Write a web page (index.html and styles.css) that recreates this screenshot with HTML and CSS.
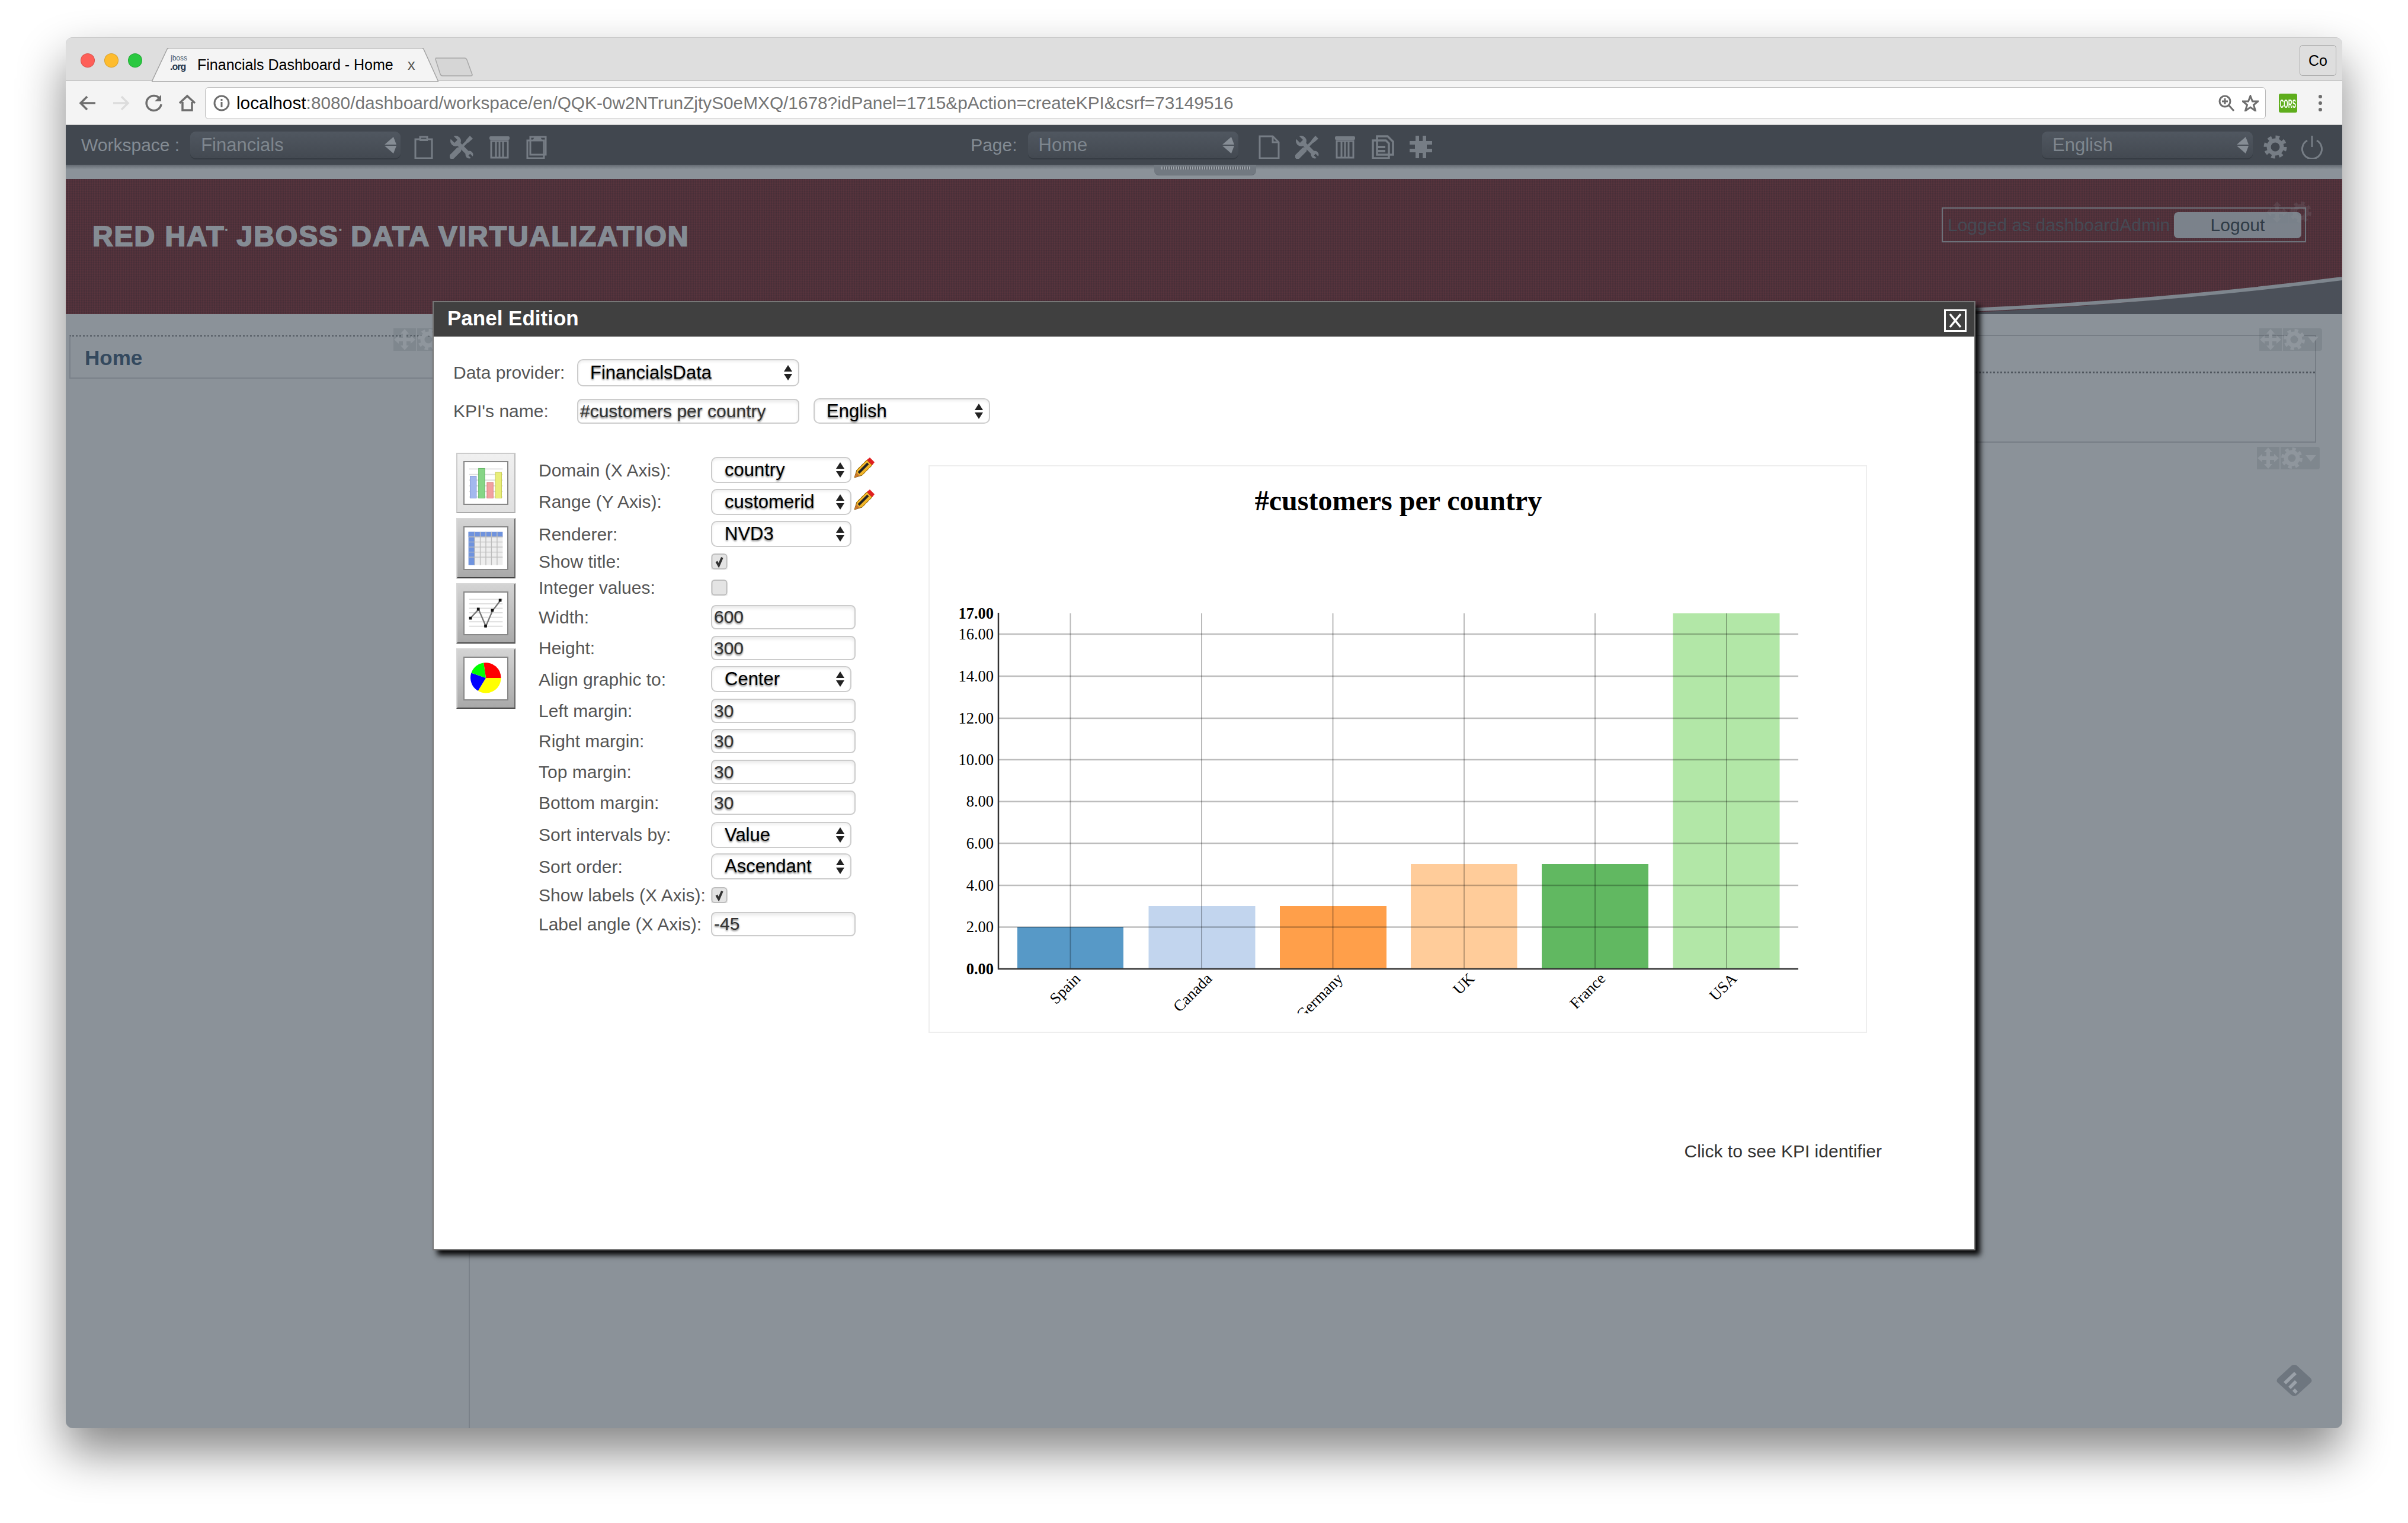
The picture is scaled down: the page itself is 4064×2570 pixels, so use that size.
FILE: index.html
```html
<!DOCTYPE html>
<html lang="en">
<head>
<meta charset="utf-8">
<title>Financials Dashboard - Home</title>
<link rel="stylesheet" href="styles.css">
</head>
<body>
<svg class="defs" width="0" height="0" aria-hidden="true">
  <symbol id="i-clip" viewBox="0 0 40 40"><path d="M6 7h8V3h12v4h8v32H6z" fill="none" stroke-width="3" class="st"/><path d="M13 8h14" stroke-width="4" class="st"/></symbol>
  <symbol id="i-tools" viewBox="0 0 40 40"><circle cx="10" cy="10" r="9" class="fl"/><path d="M0 5L5 0 13 8 8 13Z" class="bgf"/><path d="M11 11L33 33" stroke-width="7" class="st"/><circle cx="33" cy="33" r="6.500" class="fl"/><path d="M33 33L39 39" stroke-width="4" class="bgs"/><path d="M4 36L15 25" stroke-width="9" stroke-linecap="round" class="st"/><path d="M15 25L32 8" stroke-width="4.500" class="st"/><path d="M27 9L34 1l5 5-8 7z" class="fl"/></symbol>
  <symbol id="i-trash" viewBox="0 0 40 40"><rect x="3" y="2" width="34" height="6" rx="2" class="fl"/><path d="M6 10h28v28H6z" fill="none" stroke-width="3" class="st"/><path d="M14 11v26M20 11v26M26 11v26" stroke-width="3" class="st"/></symbol>
  <symbol id="i-paste" viewBox="0 0 40 40"><path d="M8 3h26v30H8z" fill="none" stroke-width="3" class="st"/><path d="M3 9h28v30H3z" fill="#424950" stroke-width="3" class="st"/><path d="M12 9l3-6h10l3 6z" class="fl"/></symbol>
  <symbol id="i-page" viewBox="0 0 40 40"><path d="M4 2h22l10 10v27H4z" fill="none" stroke-width="3" class="st"/><path d="M26 2v10h10" fill="none" stroke-width="3" class="st"/></symbol>
  <symbol id="i-copy" viewBox="0 0 40 40"><path d="M10 2h18l9 9v22H10z" fill="none" stroke-width="3.500" class="st"/><path d="M3 9h22l5 5v25H3z" fill="#424950" stroke-width="3.500" class="st"/><path d="M9 20h15M9 27h15" stroke-width="4" class="st"/></symbol>
  <symbol id="i-puzzle" viewBox="0 0 40 40"><path d="M11 1h6v9h6V1h6v9h10v6h-9v7h9v6H29v10h-6v-9h-6v9h-6V29H1v-6h9v-7H1v-6h10z" class="fl"/></symbol>
  <symbol id="i-gear" viewBox="0 0 40 40"><circle cx="20" cy="20" r="16" fill="none" stroke-width="7" stroke-dasharray="6.28 6.28" class="st"/><circle cx="20" cy="20" r="11" fill="none" stroke-width="7" class="st"/></symbol>
  <symbol id="i-power" viewBox="0 0 40 40"><path d="M12 9a16.500 16.500 0 1 0 16 0" fill="none" stroke-width="3" class="st"/><path d="M20 1v19" stroke-width="3" class="st"/></symbol>
  <symbol id="i-updown" viewBox="0 0 24 28"><path d="M17 0l5 13H10L2 13z" class="ar"/><path d="M2 15h20l-5 13z" class="ar"/></symbol>
  <symbol id="i-pencil" viewBox="0 0 36 36"><path d="M2 34l4-13L23 4l9 9-17 17z" fill="#f0b429" stroke="#7a5a10" stroke-width="1"/><path d="M9 26L25 10" stroke="#222" stroke-width="4"/><path d="M23 4l5-4 8 8-4 5z" fill="#e02020"/><path d="M2 34l3-9 6 6z" fill="#c9762c"/></symbol>
  <symbol id="i-move" viewBox="0 0 38 38"><path d="M19 1l7 8h-4v7h7v-4l8 7-8 7v-4h-7v7h4l-7 8-7-8h4v-7H9v4l-8-7 8-7v4h7V9h-4z"/></symbol>
  <symbol id="i-cog" viewBox="0 0 38 38"><circle cx="19" cy="19" r="15" fill="none" stroke="currentColor" stroke-width="6" stroke-dasharray="5.9 5.9"/><circle cx="19" cy="19" r="10" fill="none" stroke="currentColor" stroke-width="7"/></symbol>
</svg>

<main class="window">
  <header class="tabstrip">
    <div class="lights">
      <span class="light red"></span><span class="light yellow"></span><span class="light green"></span>
    </div>
    <div class="tab">
      <svg class="tab-shape" viewBox="0 0 484 57"><path d="M0 57L26 2Q27 0 29 0H456Q458 0 459 2L484 57Z"/></svg>
      <div class="favicon"><span class="fav-a">jboss</span><span class="fav-b">.org</span></div>
      <span class="tab-title">Financials Dashboard - Home</span>
      <span class="tab-close">x</span>
    </div>
    <svg class="newtab" viewBox="0 0 64 32"><path d="M1 1H50Q53 1 54 4L63 29Q63 31 61 31H13Q10 31 9 28L1 3Q1 1 3 1Z"/></svg>
    <div class="profile">Co</div>
  </header>

  <div class="toolbar">
    <svg class="nav" viewBox="0 0 32 32"><path d="M29 16H5M15 5L4 16l11 11" class="nav-line"/></svg>
    <svg class="nav off" viewBox="0 0 32 32"><path d="M3 16h24M17 5l11 11-11 11" class="nav-line"/></svg>
    <svg class="nav" viewBox="0 0 32 32"><path d="M26 9A12.500 12.500 0 1 0 28 18" class="nav-line"/><path d="M28 2v11H17z" class="nav-fill"/></svg>
    <svg class="nav" viewBox="0 0 32 32"><path d="M3 16L16 4l13 12M8 14v14h16V14" class="nav-line"/></svg>
    <div class="omnibox">
      <svg class="info" viewBox="0 0 28 28"><circle cx="14" cy="14" r="12" class="nav-line thin"/><path d="M12.500 12h3v9h-3zM12.500 7h3v3h-3z" class="nav-fill"/></svg>
      <span class="url"><span class="host">localhost</span>:8080/dashboard/workspace/en/QQK-0w2NTrunZjtyS0eMXQ/1678?idPanel=1715&amp;pAction=createKPI&amp;csrf=73149516</span>
      <svg class="omni-icon" viewBox="0 0 28 28"><circle cx="11" cy="11" r="9" class="nav-line thin"/><path d="M11 6v10M6 11h10M17 17l9 10" class="nav-line thin"/></svg>
      <svg class="omni-icon star" viewBox="0 0 28 28"><path d="M14 2l3.500 9H27l-7.500 6 3 10L14 21l-8.500 6 3-10L1 11h9.500z" class="nav-line thin"/></svg>
    </div>
    <div class="cors"><span class="cors-text">CORS</span></div>
    <div class="dots"><span class="dot"></span><span class="dot"></span><span class="dot"></span></div>
  </div>

  <nav class="adminbar">
    <div class="bar-group">
      <span class="bar-label">Workspace :</span>
      <div class="bar-select"><span>Financials</span><svg class="updown"><use href="#i-updown"/></svg></div>
      <div class="bar-icons">
        <svg class="bar-icon"><use href="#i-clip"/></svg>
        <svg class="bar-icon"><use href="#i-tools"/></svg>
        <svg class="bar-icon"><use href="#i-trash"/></svg>
        <svg class="bar-icon"><use href="#i-paste"/></svg>
      </div>
    </div>
    <div class="bar-group mid">
      <span class="bar-label">Page:</span>
      <div class="bar-select"><span>Home</span><svg class="updown"><use href="#i-updown"/></svg></div>
      <div class="bar-icons wide">
        <svg class="bar-icon"><use href="#i-page"/></svg>
        <svg class="bar-icon"><use href="#i-tools"/></svg>
        <svg class="bar-icon"><use href="#i-trash"/></svg>
        <svg class="bar-icon"><use href="#i-copy"/></svg>
        <svg class="bar-icon"><use href="#i-puzzle"/></svg>
      </div>
    </div>
    <div class="bar-group end">
      <div class="bar-select"><span>English</span><svg class="updown"><use href="#i-updown"/></svg></div>
      <div class="bar-icons tight">
        <svg class="bar-icon"><use href="#i-gear"/></svg>
        <svg class="bar-icon"><use href="#i-power"/></svg>
      </div>
    </div>
  </nav>
  <div class="strip"><div class="grip"></div></div>

  <section class="banner">
    <svg class="swoosh" viewBox="0 0 3842 228" preserveAspectRatio="none">
      <path d="M3150 228Q3500 215 3842 168V228Z" class="swoosh-fill"/>
      <path d="M3130 224Q3500 212 3842 168" class="swoosh-line"/>
    </svg>
    <div class="logo">RED HAT<span class="reg">•</span> JBOSS<span class="reg">•</span> DATA VIRTUALIZATION</div>
    <div class="login">
      <span class="login-text">Logged as dashboardAdmin</span>
      <span class="logout">Logout</span>
      <div class="handles over-login"><svg class="h-move"><use href="#i-move"/></svg><svg class="h-cog"><use href="#i-cog"/></svg></div>
    </div>
  </section>

  <section class="content">
    <div class="col-left">
      <div class="home-panel">Home</div>
      <div class="handles h-home"><svg class="h-move"><use href="#i-move"/></svg><svg class="h-cog"><use href="#i-cog"/></svg></div>
    </div>
    <div class="col-right">
      <div class="right-panel"><div class="right-title"></div></div>
      <div class="handles h-top"><svg class="h-move"><use href="#i-move"/></svg><svg class="h-cog"><use href="#i-cog"/></svg><span class="h-caret"></span></div>
      <div class="handles h-bottom"><svg class="h-move"><use href="#i-move"/></svg><svg class="h-cog"><use href="#i-cog"/></svg><span class="h-caret"></span></div>
    </div>
    <svg class="feed" viewBox="0 0 60 54"><path d="M26 1Q30-1 34 1L58 23Q61 27 58 30L36 50Q33 53 30 53H30Q27 53 24 50L2 30Q-1 27 2 23Z" class="feed-bg"/><path d="M12 29L30 12l4 4-18 17zM20 37l11-11 4 4-11 11zM27 44l4-4 5 5-4 4z" class="feed-fg"/></svg>

    <div class="modal">
      <div class="modal-title">
        <span>Panel Edition</span>
        <svg class="modal-close" viewBox="0 0 38 38"><rect x="1.500" y="1.500" width="35" height="35" class="close-box"/><path d="M10 8l18 22M28 8L10 30" class="close-x"/></svg>
      </div>
      <div class="modal-body">
        <div class="top-row">
          <span class="top-label">Data provider:</span>
          <div class="sel sel-wide"><span class="ctl-text">FinancialsData</span><span class="arrows"></span></div>
        </div>
        <div class="top-row second">
          <span class="top-label">KPI's name:</span>
          <div class="inp inp-wide"><span class="ctl-text">#customers per country</span></div>
          <div class="sel sel-lang"><span class="ctl-text">English</span><span class="arrows"></span></div>
        </div>
        <div class="editor">
          <div class="types">
            <div class="type-btn on"><svg class="type-art" viewBox="0 0 76 74"><rect width="76" height="74" class="art-bg"/><path d="M8 12H68M8 22H68M8 32H68M8 42H68M8 52H68M8 62H68" class="art-grid"/><rect x="10" y="25" width="11" height="39" fill="#a3b8ee" stroke="#7f96d8"/><rect x="25" y="11" width="11" height="53" fill="#86d586" stroke="#5fb35f"/><rect x="40" y="36" width="11" height="28" fill="#f2a0a0" stroke="#d97f7f"/><rect x="55" y="18" width="11" height="46" fill="#e9ee7a" stroke="#c9cc55"/></svg></div>
            <div class="type-btn"><svg class="type-art" viewBox="0 0 76 74"><rect width="76" height="74" class="art-bg"/><rect x="7" y="8" width="61" height="59" fill="#eee"/><rect x="7" y="8" width="61" height="9" fill="#6f93de"/><rect x="7" y="8" width="11" height="59" fill="#6f93de"/><path d="M7 17H68M7 26H68M7 35H68M7 44H68M7 53H68M18 8V67M28 8V67M38 8V67M48 8V67M58 8V67" class="art-cells"/></svg></div>
            <div class="type-btn"><svg class="type-art" viewBox="0 0 76 74"><rect width="76" height="74" class="art-bg"/><path d="M8 12H68M8 20H68M8 28H68M8 36H68M8 44H68M8 52H68M8 60H68" class="art-grid"/><path d="M11 45L25 30 38 60 50 32 64 14" class="art-line"/><path d="M8 43h5v5H8zM22 27h5v5h-5zM35 57h5v5h-5zM47 29h5v5h-5zM61 11h5v5h-5z" class="art-node"/></svg></div>
            <div class="type-btn"><svg class="type-art" viewBox="0 0 76 74"><rect width="76" height="74" class="art-bg"/><path d="M38 36L34 9A27 27 0 0 1 65 36Z" fill="#f00"/><path d="M38 36H65A27 27 0 0 1 24 59Z" fill="#ff0"/><path d="M38 36L24 59A27 27 0 0 1 12 27Z" fill="#00f"/><path d="M38 36L12 27A27 27 0 0 1 34 9Z" fill="#0f0"/></svg></div>
          </div>
          <div class="form">
            <div class="frow"><span class="flabel">Domain (X Axis):</span><div class="sel sel-form"><span class="ctl-text">country</span><span class="arrows"></span></div><svg class="pencil"><use href="#i-pencil"/></svg></div>
            <div class="frow"><span class="flabel">Range (Y Axis):</span><div class="sel sel-form"><span class="ctl-text">customerid</span><span class="arrows"></span></div><svg class="pencil"><use href="#i-pencil"/></svg></div>
            <div class="frow"><span class="flabel">Renderer:</span><div class="sel sel-form"><span class="ctl-text">NVD3</span><span class="arrows"></span></div></div>
            <div class="frow"><span class="flabel">Show title:</span><svg class="check" viewBox="0 0 28 28"><rect x="1" y="1" width="26" height="26" rx="5" class="check-box"/><path d="M9 14l4 7 6-14" class="check-mark"/></svg></div>
            <div class="frow"><span class="flabel">Integer values:</span><svg class="check" viewBox="0 0 28 28"><rect x="1" y="1" width="26" height="26" rx="5" class="check-box"/></svg></div>
            <div class="frow"><span class="flabel">Width:</span><div class="inp inp-form"><span class="ctl-text">600</span></div></div>
            <div class="frow"><span class="flabel">Height:</span><div class="inp inp-form"><span class="ctl-text">300</span></div></div>
            <div class="frow"><span class="flabel">Align graphic to:</span><div class="sel sel-form"><span class="ctl-text">Center</span><span class="arrows"></span></div></div>
            <div class="frow"><span class="flabel">Left margin:</span><div class="inp inp-form"><span class="ctl-text">30</span></div></div>
            <div class="frow"><span class="flabel">Right margin:</span><div class="inp inp-form"><span class="ctl-text">30</span></div></div>
            <div class="frow"><span class="flabel">Top margin:</span><div class="inp inp-form"><span class="ctl-text">30</span></div></div>
            <div class="frow"><span class="flabel">Bottom margin:</span><div class="inp inp-form"><span class="ctl-text">30</span></div></div>
            <div class="frow"><span class="flabel">Sort intervals by:</span><div class="sel sel-form"><span class="ctl-text">Value</span><span class="arrows"></span></div></div>
            <div class="frow"><span class="flabel">Sort order:</span><div class="sel sel-form"><span class="ctl-text">Ascendant</span><span class="arrows"></span></div></div>
            <div class="frow"><span class="flabel">Show labels (X Axis):</span><svg class="check" viewBox="0 0 28 28"><rect x="1" y="1" width="26" height="26" rx="5" class="check-box"/><path d="M9 14l4 7 6-14" class="check-mark"/></svg></div>
            <div class="frow"><span class="flabel">Label angle (X Axis):</span><div class="inp inp-form"><span class="ctl-text">-45</span></div></div>
          </div>
          <div class="chart-frame">
            <svg class="chart" viewBox="1569 787 1580 954" width="1580" height="954">
              <defs><clipPath id="labelclip"><rect x="1569" y="787" width="1580" height="923"/></clipPath></defs>
              <text x="2360" y="861" class="c-title">#customers per country</text>
              <g class="bars">
                <rect x="1717" y="1564" width="179" height="71" fill="#1f77b4"/>
                <rect x="1938.500" y="1529" width="180" height="106" fill="#aec7e8"/>
                <rect x="2160" y="1529" width="180" height="106" fill="#ff7f0e"/>
                <rect x="2381" y="1458" width="179.500" height="177" fill="#ffbb78"/>
                <rect x="2602" y="1458" width="180" height="177" fill="#2ca02c"/>
                <rect x="2823.500" y="1035" width="180" height="600" fill="#98df8a"/>
              </g>
              <g class="grid">
                <path d="M1685 1070H3035M1685 1141H3035M1685 1212H3035M1685 1282H3035M1685 1352.500H3035M1685 1423H3035M1685 1494H3035M1685 1564.500H3035" class="grid-h"/>
                <path d="M1806.500 1035V1635M2028 1035V1635M2249.500 1035V1635M2471 1035V1635M2692 1035V1635M2914 1035V1635" class="grid-v"/>
              </g>
              <path d="M1685 1034V1636M1684 1635H3035" class="axis"/>
              <g class="y-ticks">
                <text x="1677" y="1044" class="bold">17.00</text>
                <text x="1677" y="1079">16.00</text>
                <text x="1677" y="1150">14.00</text>
                <text x="1677" y="1221">12.00</text>
                <text x="1677" y="1291">10.00</text>
                <text x="1677" y="1361">8.00</text>
                <text x="1677" y="1432">6.00</text>
                <text x="1677" y="1503">4.00</text>
                <text x="1677" y="1573">2.00</text>
                <text x="1677" y="1644" class="bold">0.00</text>
              </g>
              <g class="x-ticks" clip-path="url(#labelclip)">
                <text transform="translate(1825 1653) rotate(-45)">Spain</text>
                <text transform="translate(2047 1653) rotate(-45)">Canada</text>
                <text transform="translate(2268 1653) rotate(-45)">Germany</text>
                <text transform="translate(2490 1653) rotate(-45)">UK</text>
                <text transform="translate(2711 1653) rotate(-45)">France</text>
                <text transform="translate(2933 1653) rotate(-45)">USA</text>
              </g>
            </svg>
          </div>
        </div>
        <div class="kpi-id">Click to see KPI identifier</div>
      </div>
    </div>
  </section>
</main>
</body>
</html>
```
FILE: styles.css
```css
* { box-sizing: border-box; }
html, body { margin: 0; padding: 0; background: #fff; }
body { height: 2570px; padding: 63px 111px 0; overflow: hidden; font-family: "Liberation Sans", Arial, sans-serif; }
.defs { position: absolute; }

.window { display: flex; flex-direction: column; height: 2347px; border-radius: 12px; background: #8b9299; overflow: hidden; box-shadow: 0 40px 80px rgba(0,0,0,.48); }

/* tab strip */
.tabstrip { position: relative; display: flex; align-items: flex-start; height: 74px; flex: none; background: #dedede; border-top: 1px solid #c2c2c2; border-bottom: 1px solid #a3a3a3; }
.lights { display: flex; gap: 16px; margin: 26px 0 0 25px; }
.light { width: 24px; height: 24px; border-radius: 50%; border: 1px solid rgba(0,0,0,.14); }
.red { background: #fe5f58; }
.yellow { background: #febc2e; }
.green { background: #2ac840; }
.tab { position: relative; display: flex; align-items: center; width: 484px; height: 57px; margin: 17px 0 0 16px; padding-left: 32px; }
.tab-shape { position: absolute; inset: 0; width: 484px; height: 57px; }
.tab-shape path { fill: #f4f4f4; stroke: #a3a3a3; stroke-width: 1.500; }
.favicon { position: relative; display: flex; flex-direction: column; width: 32px; height: 34px; margin-top: -2px; color: #25364c; line-height: 1; }
.fav-a { font-size: 12px; line-height: 13px; color: #4a5a6c; }
.fav-b { font-size: 16px; line-height: 16px; font-weight: bold; letter-spacing: -1px; margin-left: -1px; }
.tab-title { position: relative; margin-left: 13px; font-size: 25px; color: #000; white-space: nowrap; }
.tab-close { position: relative; margin-left: 24px; font-size: 26px; color: #555; }
.newtab { width: 64px; height: 32px; margin: 33px 0 0 -6px; }
.newtab path { fill: #d6d6d6; stroke: #a8a8a8; stroke-width: 1.500; }
.profile { margin: 12px 10px 0 auto; width: 62px; height: 52px; display: flex; align-items: center; justify-content: center; border: 1.500px solid #ababab; border-radius: 5px; font-size: 25px; color: #000; }

/* toolbar */
.toolbar { display: flex; align-items: center; height: 74px; flex: none; padding-left: 21px; gap: 24px; background: #f4f4f4; border-bottom: 1.500px solid #c4c4c4; }
.nav { width: 32px; height: 32px; flex: none; }
.nav-line { fill: none; stroke: #6e6e6e; stroke-width: 3.500; }
.nav-line.thin { stroke-width: 3; }
.nav-fill { fill: #6e6e6e; }
.off .nav-line { stroke: #dcdcdc; }
.omnibox { display: flex; align-items: center; width: 3478px; height: 54px; margin-left: -10px; padding: 0 11px 0 13px; background: #fff; border: 1.500px solid #bababa; border-radius: 6px; }
.info { width: 28px; height: 28px; flex: none; }
.url { margin-left: 11px; font-size: 29.800px; color: #757575; white-space: nowrap; }
.host { color: #000; }
.omni-icon { width: 28px; height: 28px; flex: none; margin-left: auto; }
.omni-icon.star { margin-left: 12px; }
.cors { display: flex; align-items: center; justify-content: center; width: 31px; height: 32px; margin-left: -2px; background: #5ead1c; border-radius: 3px; overflow: hidden; }
.cors-text { font-size: 14px; color: #fff; font-weight: bold; transform: scale(.68, 1.500); }
.dots { display: flex; flex-direction: column; gap: 5px; margin-left: 12px; }
.dot { width: 6px; height: 6px; border-radius: 50%; background: #6e6e6e; }

/* admin bar */
.adminbar { display: flex; align-items: center; height: 67px; flex: none; padding: 0 31px 0 26px; background: #41474f; }
.bar-group { display: flex; align-items: center; }
.bar-group.mid { margin-left: 711px; }
.bar-group.end { margin-left: auto; }
.bar-label { font-size: 30px; color: #838b93; white-space: nowrap; }
.bar-select { position: relative; display: flex; align-items: center; width: 355px; height: 45px; margin-left: 18px; padding-left: 18px; border-radius: 9px; background: linear-gradient(#505760, #434951); box-shadow: 0 2px 0 #363c43; font-size: 31px; color: #7e868e; }
.bar-group.end .bar-select { width: 356px; margin-left: 0; }
.updown { position: absolute; right: 5px; top: 9px; width: 24px; height: 28px; }
.ar { fill: #868d95; }
.bar-icons { display: flex; gap: 24px; margin-left: 19px; padding-top: 6px; }
.bar-icons.wide { margin-left: 32px; }
.bar-icons.tight { gap: 22px; margin-left: 18px; }
.bar-icon { width: 40px; height: 40px; }
.st { stroke: #767d85; fill: none; }
.fl { fill: #767d85; }
.bgf { fill: #41474f; }
.bgs { stroke: #41474f; fill: none; }

.strip { position: relative; height: 24px; flex: none; background: linear-gradient(#646a72, #8b9299 8px); }
.grip { position: absolute; left: 1837px; top: 0; width: 172px; height: 18px; border-radius: 0 0 8px 8px; background: #727981; border-bottom: 1px solid #666d75; }
.grip::before { content: ""; position: absolute; left: 12px; right: 10px; top: 3px; height: 5px; background: repeating-linear-gradient(90deg, #9ea4ab 0 2px, #5c6269 2px 4px); }

/* banner */
.banner { position: relative; display: flex; justify-content: space-between; align-items: flex-start; height: 228px; flex: none; background-color: #51343d; background-image: repeating-linear-gradient(90deg, rgba(110,50,60,.14) 0 2px, rgba(40,30,40,.14) 2px 4px), repeating-linear-gradient(0deg, rgba(110,50,60,.1) 0 2px, rgba(40,30,40,.1) 2px 4px); }
.swoosh { position: absolute; inset: 0; width: 100%; height: 100%; }
.swoosh-fill { fill: #4b5059; }
.swoosh-line { fill: none; stroke: #7e868e; stroke-width: 6; }
.logo { position: relative; margin: 56px 0 0 45px; font-size: 48px; line-height: 60px; font-weight: bold; letter-spacing: 1.950px; color: #858c94; -webkit-text-stroke: 2px #858c94; white-space: nowrap; }
.reg { font-size: 14px; vertical-align: 22px; letter-spacing: 0; -webkit-text-stroke: 0; }
.login { position: relative; display: flex; align-items: center; width: 615px; height: 59px; margin: 48px 61px 0 0; padding: 0 6px 0 8px; border: 2.500px solid #6c727a; }
.login-text { font-size: 30px; color: #454a54; white-space: nowrap; }
.logout { display: flex; justify-content: center; align-items: center; width: 215px; height: 44px; margin-left: auto; border-radius: 7px; background: #7b828b; font-size: 30px; color: #2f3b46; }

/* content */
.content { position: relative; flex: 1; display: grid; grid-template-columns: 682px 1fr; }
.col-left { position: relative; border-right: 2px solid #7a8189; }
.home-panel { margin: 35px 0 0 6px; height: 74px; padding: 16px 0 0 24px; border: 2px solid #7a8189; border-top: 3px dotted #5e656d; border-right: 0; font-size: 35px; line-height: 40px; font-weight: bold; color: #34495e; }
.col-right { position: relative; padding: 35px 44px 0 0; }
.right-panel { height: 182px; border: 2.500px solid #767d85; }
.right-title { margin-top: 60px; border-top: 3px dotted #4f565e; }
.handles { position: absolute; display: flex; align-items: center; height: 38px; color: #8f969d; }
.handles svg { height: 38px; background: rgba(70,80,90,.16); }
.h-move { width: 38px; margin-right: 2px; fill: #8f969d; }
.h-cog { width: 38px; color: #8f969d; }
.h-caret { width: 28px; height: 38px; background: rgba(70,80,90,.16); position: relative; border-radius: 0 4px 4px 0; }
.h-caret::after { content: ""; position: absolute; left: 4px; top: 14px; border: 9px solid transparent; border-top: 11px solid #8f969d; border-bottom: 0; }
.h-home { left: 553px; top: 24px; }
.h-top { right: 34px; top: 24px; }
.h-bottom { right: 38px; top: 224px; }
.over-login { right: -12px; top: -13px; opacity: .16; }
.feed { position: absolute; left: 3731px; bottom: 53px; width: 60px; height: 54px; }
.feed-bg { fill: #6e767f; }
.feed-fg { fill: #9aa1a9; }

/* modal */
.modal { position: absolute; left: 619px; top: -22px; width: 2604px; height: 1602px; background: #fff; border: 2px solid #777; box-shadow: 8px 8px 9px rgba(0,0,0,.95); }
.modal-title { display: flex; align-items: center; justify-content: space-between; height: 59px; padding: 0 13px 4px 23px; background: #404040; border-bottom: 2px solid #888; font-size: 35px; font-weight: bold; color: #fff; }
.modal-close { width: 38px; height: 38px; margin-top: 8px; }
.close-box { fill: #404040; stroke: #fff; stroke-width: 3; }
.close-x { fill: none; stroke: #fff; stroke-width: 3.500; }
.modal-body { padding: 37px 156px 0 33px; }
.top-row { display: flex; align-items: center; font-size: 30px; color: #555; }
.top-row.second { margin-top: 20px; }
.top-label { width: 209px; flex: none; }
.sel { position: relative; display: flex; align-items: center; background: #fff; border: 2px solid #ccc; border-radius: 10px; box-shadow: inset 0 3px 4px rgba(0,0,0,.06); }
.inp { display: flex; align-items: center; background: #fff; border: 2px solid #ccc; border-radius: 8px; box-shadow: inset 0 4px 5px rgba(0,0,0,.08); padding-left: 3px; height: 41px; }
.ctl-text { font-size: 30px; color: #333; white-space: nowrap; text-shadow: 0 2px 3px rgba(0,0,0,.55); }
.sel .ctl-text { font-size: 31px; color: #000; }
.sel-wide { width: 375px; height: 46px; padding-left: 20px; }
.sel-lang { width: 298px; height: 43px; margin-left: 24px; padding-left: 20px; }
.inp-wide { width: 375px; height: 42px; }
.arrows { position: absolute; right: 10px; top: 50%; width: 14px; height: 26px; margin-top: -13px; }
.arrows::before, .arrows::after { content: ""; position: absolute; left: 0; border-left: 7px solid transparent; border-right: 7px solid transparent; }
.arrows::before { top: 0; border-bottom: 11px solid #222; }
.arrows::after { bottom: 0; border-top: 11px solid #222; }

.editor { display: flex; align-items: flex-start; margin-top: 49px; padding-left: 5px; }
.types { display: flex; flex-direction: column; gap: 8px; width: 100px; flex: none; }
.type-btn { display: flex; align-items: center; justify-content: center; width: 100px; height: 102px; background: linear-gradient(#d4d4d4, #a9a9a9); border: 2px solid; border-color: #d8d8d8 #666 #444 #d8d8d8; }
.type-btn.on { background: linear-gradient(#f0f0f0, #e0e0e0); border-color: #ccc #bbb #aaa #ccc; }
.type-art { width: 76px; height: 74px; border: 2px solid #888; }
.art-bg { fill: #fff; }
.art-grid { fill: none; stroke: #ddd; stroke-width: 2; }
.art-cells { fill: none; stroke: #bdbdbd; stroke-width: 1.500; }
.art-line { fill: none; stroke: #777; stroke-width: 2.500; }
.art-node { fill: #111; }

.form { display: grid; grid-template-columns: 1fr; grid-template-rows: 53.500px 54.500px 55px 44px 42.500px 52.500px 51px 55px 51px 52px 52px 52.500px 53.500px 57px 41.500px 41px; width: 570px; margin: 7px 0 0 39px; flex: none; }
.frow { display: flex; align-items: center; align-self: start; min-height: 27px; }
.flabel { width: 291px; flex: none; font-size: 30px; line-height: 27px; color: #555; white-space: nowrap; }
.sel-form { width: 237px; height: 44px; padding-left: 21px; }
.inp-form { width: 244px; }
.pencil { width: 36px; height: 36px; margin: -6px 0 0 3px; }
.check { width: 28px; height: 27px; }
.check-box { fill: #e4e4e4; stroke: #bdbdbd; stroke-width: 2; filter: drop-shadow(0 2px 2px rgba(0,0,0,.18)); }
.check-mark { fill: none; stroke: #333; stroke-width: 4; }

.chart-frame { width: 1584px; height: 958px; margin: 21px 0 0 88px; flex: none; background: #fff; border: 2px solid #eee; }
.chart { display: block; }
.c-title { font-family: "Liberation Serif", "Times New Roman", serif; font-size: 48px; font-weight: bold; text-anchor: middle; fill: #000; }
.bars rect { fill-opacity: .75; }
.grid-h { fill: none; stroke: rgba(0,0,0,.26); stroke-width: 2.500; }
.grid-v { fill: none; stroke: rgba(0,0,0,.27); stroke-width: 2; }
.axis { fill: none; stroke: #333; stroke-width: 2.500; }
.y-ticks text { font-family: "Liberation Serif", "Times New Roman", serif; font-size: 26.500px; text-anchor: end; fill: #000; }
.y-ticks .bold { font-weight: bold; }
.x-ticks text { font-family: "Liberation Serif", "Times New Roman", serif; font-size: 26.500px; text-anchor: end; fill: #000; }
.kpi-id { margin-top: 180px; font-size: 30px; line-height: 40px; color: #333; text-align: right; }
```
